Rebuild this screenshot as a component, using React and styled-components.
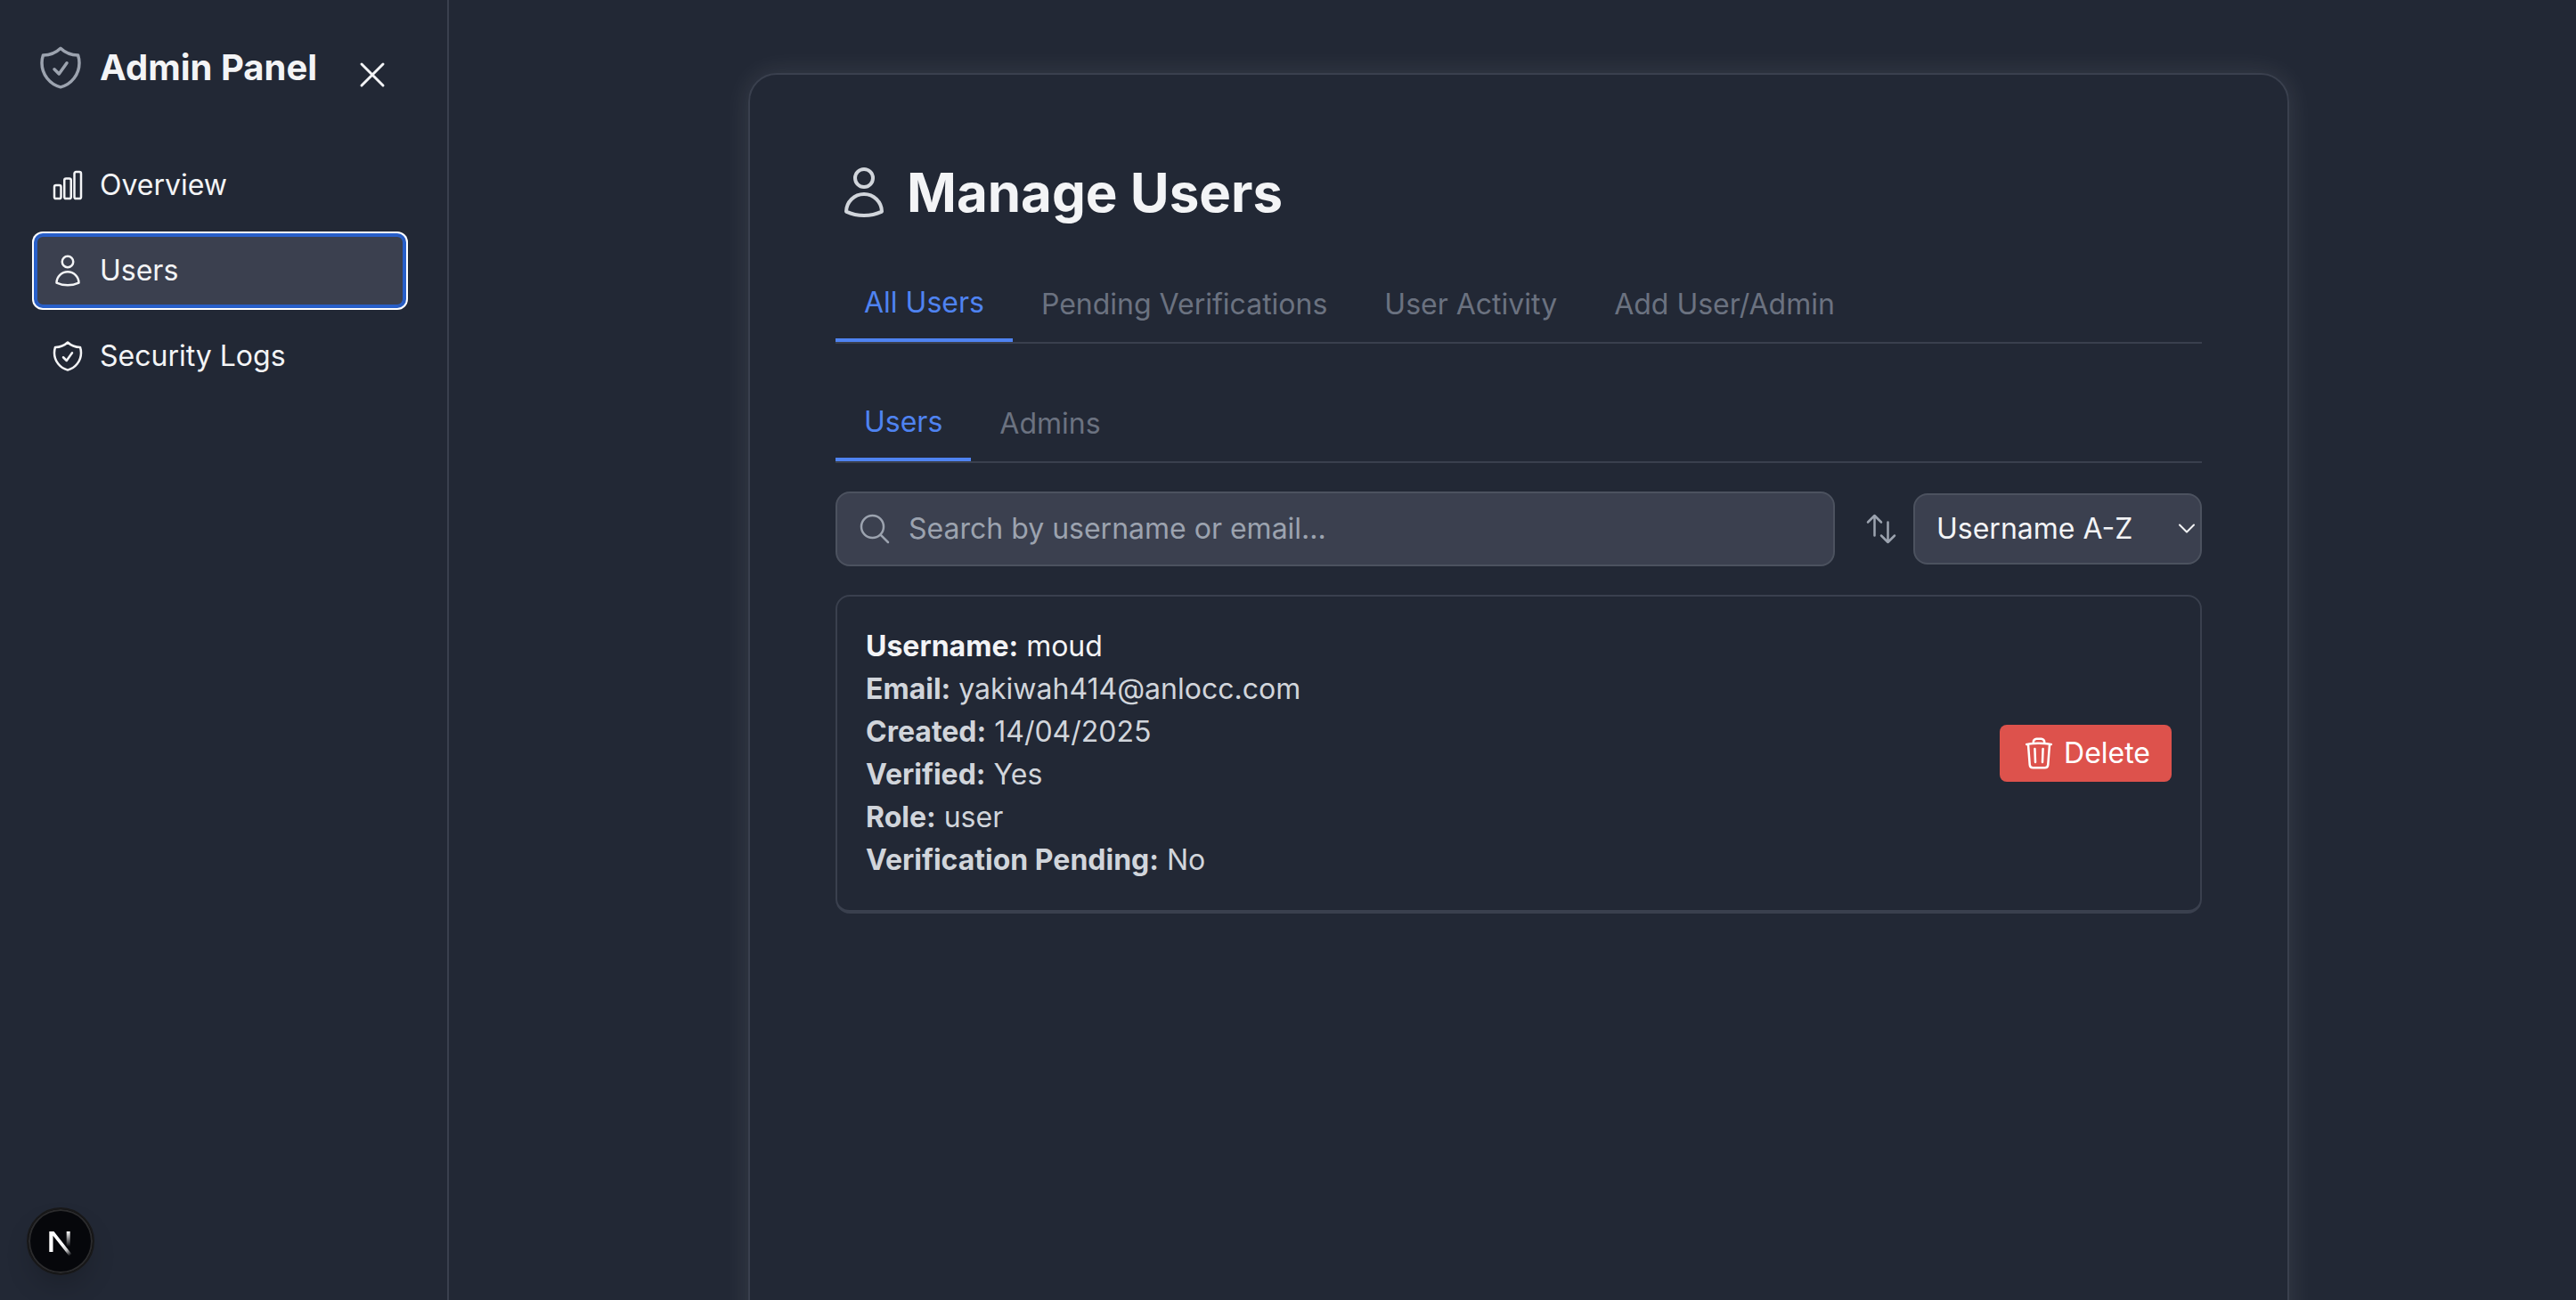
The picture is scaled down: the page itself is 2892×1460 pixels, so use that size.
import React from "react";
import styled, { createGlobalStyle, css } from "styled-components";
import {
  HiOutlineShieldCheck,
  HiOutlineChartBar,
  HiOutlineUser,
  HiOutlineXMark,
  HiOutlineArrowsUpDown,
  HiOutlineMagnifyingGlass,
  HiOutlineTrash,
} from "react-icons/hi2";

const color = {
  page: "#222835",
  surface: "#3b404f",
  line: "#3a404e",
  edge: "#4c525f",
  text: "#f3f4f6",
  soft: "#d1d5db",
  muted: "#9ca3af",
  dim: "#6b7280",
  accent: "#4f83f1",
  ring: "#285fc9",
  danger: "#dd524c",
};

const GlobalStyle = createGlobalStyle`
  *, *::before, *::after { box-sizing: border-box; }
  html { background: ${color.page}; }
  body {
    margin: 0;
    overflow: hidden;
    background: ${color.page};
    color: ${color.text};
    font-family: Inter, "Liberation Sans", sans-serif;
    font-size: 32px;
    line-height: 48px;
  }
  button, input, select { font: inherit; color: inherit; }
  button { border: 0; background: none; cursor: pointer; }
  svg { display: block; flex: none; }
`;

const Shell = styled.div`
  display: flex;
  height: 100vh;
`;

const Sidebar = styled.aside`
  display: flex;
  flex-direction: column;
  flex: none;
  width: 504px;
  padding: 48px 48px 24px 40px;
  border-right: 2px solid ${color.line};
`;

const Brand = styled.header`
  display: flex;
  align-items: flex-start;
  gap: 16px;
  margin-bottom: 48px;
`;

const BrandIcon = styled(HiOutlineShieldCheck)`
  width: 56px;
  height: 56px;
  color: ${color.muted};
`;

const BrandName = styled.h2`
  flex: 1;
  margin: 0;
  font-size: 40px;
  line-height: 56px;
  font-weight: 700;
`;

const CloseButton = styled.button`
  padding: 12px;
  svg {
    width: 48px;
    height: 48px;
  }
`;

const Nav = styled.nav`
  display: flex;
  flex-direction: column;
  gap: 16px;
`;

const NavItem = styled.button`
  display: flex;
  align-items: center;
  gap: 16px;
  padding: 16px;
  border-radius: 8px;
  text-align: left;
  svg {
    width: 40px;
    height: 40px;
  }
  ${(p) =>
    p.$active &&
    css`
      background: ${color.surface};
      box-shadow: inset 0 0 0 2px ${color.ring}, 0 0 0 2px ${color.ring}, 0 0 0 4px #fff;
    `}
`;

const DevBadge = styled.button`
  position: fixed;
  left: 30px;
  bottom: 28px;
  display: grid;
  place-items: center;
  width: 76px;
  height: 76px;
  padding: 0;
  border: 2px solid #181819;
  border-radius: 50%;
  background: #06070b;
  box-shadow: inset 0 0 0 2px #2b2b2d, 0 16px 32px -8px rgba(0, 0, 0, 0.24);
  svg {
    width: 72px;
    height: 72px;
  }
`;

const Main = styled.main`
  display: flex;
  flex: 1;
  min-width: 0;
  overflow: hidden;
  justify-content: center;
  align-items: flex-start;
  padding: 82px 48px 0 62px;
`;

const Card = styled.section`
  width: 100%;
  max-width: 1730px;
  min-height: 1600px;
  padding: 96px;
  border: 2px solid ${color.line};
  border-radius: 32px;
  box-shadow: 0 0 30px rgba(255, 255, 255, 0.1);
`;

const Title = styled.h1`
  display: flex;
  align-items: center;
  gap: 16px;
  margin: 0 0 48px;
  font-size: 60px;
  line-height: 72px;
  font-weight: 700;
  svg {
    width: 64px;
    height: 64px;
    color: ${color.soft};
  }
`;

const Tabs = styled.div`
  display: flex;
  margin-bottom: ${(p) => p.$gap}px;
  border-bottom: 2px solid ${color.line};
`;

const Tab = styled.button`
  padding: 16px 32px;
  color: ${color.dim};
  ${(p) =>
    p.$active &&
    css`
      color: ${color.accent};
      border-bottom: 4px solid ${color.accent};
    `}
`;

const Toolbar = styled.div`
  display: flex;
  align-items: center;
  gap: 32px;
  margin-bottom: 32px;
`;

const SearchBox = styled.label`
  display: flex;
  align-items: center;
  flex: 1;
  gap: 18px;
  height: 84px;
  padding: 0 22px;
  border: 2px solid ${color.edge};
  border-radius: 16px;
  background: ${color.surface};
  svg {
    width: 40px;
    height: 40px;
    color: ${color.muted};
  }
`;

const SearchInput = styled.input`
  flex: 1;
  min-width: 0;
  padding: 0;
  border: 0;
  outline: 0;
  background: none;
  &::placeholder {
    color: ${color.muted};
    opacity: 1;
  }
`;

const SortBox = styled.label`
  display: flex;
  align-items: center;
  gap: 16px;
  svg {
    width: 40px;
    height: 40px;
    color: ${color.muted};
  }
`;

const SelectWrap = styled.span`
  display: grid;
  align-items: center;
  > * {
    grid-area: 1 / 1;
  }
  svg {
    justify-self: end;
    width: 18px;
    height: 12px;
    margin-right: 8px;
    color: ${color.text};
    pointer-events: none;
  }
`;

const Select = styled.select`
  appearance: none;
  width: 324px;
  height: 80px;
  padding: 0 24px;
  border: 2px solid ${color.edge};
  border-radius: 16px;
  background: ${color.surface};
`;

const UserRow = styled.article`
  display: flex;
  align-items: center;
  justify-content: space-between;
  padding: 32px;
  border: 2px solid ${color.line};
  border-bottom-width: 4px;
  border-radius: 16px;
`;

const Facts = styled.div`
  color: ${color.soft};
`;

const Fact = styled.p`
  margin: 0;
  color: ${(p) => (p.$lead ? color.text : "inherit")};
`;

const DeleteButton = styled.button`
  display: flex;
  align-items: center;
  gap: 8px;
  padding: 8px 24px;
  border-radius: 8px;
  background: ${color.danger};
  color: #fff;
  svg {
    width: 40px;
    height: 40px;
  }
`;

const navItems = [
  { label: "Overview", Icon: HiOutlineChartBar },
  { label: "Users", Icon: HiOutlineUser },
  { label: "Security Logs", Icon: HiOutlineShieldCheck },
];

const sections = ["All Users", "Pending Verifications", "User Activity", "Add User/Admin"];
const roles = ["Users", "Admins"];

const facts = [
  ["Username", "moud"],
  ["Email", "yakiwah414@anlocc.com"],
  ["Created", "14/04/2025"],
  ["Verified", "Yes"],
  ["Role", "user"],
  ["Verification Pending", "No"],
];

function DevLogo() {
  return (
    <svg viewBox="0 0 72 72" fill="none" aria-hidden="true">
      <defs>
        <linearGradient id="diagonal" x1="38" y1="40" x2="47" y2="52" gradientUnits="userSpaceOnUse">
          <stop stopColor="#fff" />
          <stop offset="0.5" stopColor="#fff" stopOpacity="0.8" />
          <stop offset="1" stopColor="#fff" stopOpacity="0" />
        </linearGradient>
        <linearGradient id="stem" x1="45" y1="25" x2="45" y2="42" gradientUnits="userSpaceOnUse">
          <stop stopColor="#fff" />
          <stop offset="1" stopColor="#fff" stopOpacity="0" />
        </linearGradient>
      </defs>
      <path d="M23.300 25h5.200L48.500 50.500l-2.800 2.200L27.500 29.800V48h-4.200z" fill="url(#diagonal)" />
      <path d="M42.700 25h4v17h-4z" fill="url(#stem)" />
    </svg>
  );
}

function Chevron() {
  return (
    <svg viewBox="0 0 18 12" fill="none" stroke="currentColor" strokeWidth="2" strokeLinecap="round" strokeLinejoin="round" aria-hidden="true">
      <path d="M1 1.500l8 8 8-8" />
    </svg>
  );
}

function TabBar({ label, items, gap }) {
  return (
    <Tabs role="tablist" aria-label={label} $gap={gap}>
      {items.map((item, i) => (
        <Tab key={item} type="button" role="tab" aria-selected={i === 0} $active={i === 0}>
          {item}
        </Tab>
      ))}
    </Tabs>
  );
}

export default function App() {
  return (
    <>
      <GlobalStyle />
      <Shell>
        <Sidebar>
          <Brand>
            <BrandIcon />
            <BrandName>Admin Panel</BrandName>
            <CloseButton type="button" aria-label="Close sidebar">
              <HiOutlineXMark />
            </CloseButton>
          </Brand>
          <Nav>
            {navItems.map(({ label, Icon }) => (
              <NavItem key={label} type="button" $active={label === "Users"}>
                <Icon />
                {label}
              </NavItem>
            ))}
          </Nav>
        </Sidebar>
        <Main>
          <Card>
            <Title>
              <HiOutlineUser />
              Manage Users
            </Title>
            <TabBar label="Sections" items={sections} gap={48} />
            <TabBar label="Account type" items={roles} gap={32} />
            <Toolbar>
              <SearchBox>
                <HiOutlineMagnifyingGlass />
                <SearchInput type="text" aria-label="Search users" placeholder="Search by username or email..." />
              </SearchBox>
              <SortBox>
                <HiOutlineArrowsUpDown />
                <SelectWrap>
                  <Select aria-label="Sort users" defaultValue="az">
                    <option value="az">Username A-Z</option>
                    <option value="za">Username Z-A</option>
                  </Select>
                  <Chevron />
                </SelectWrap>
              </SortBox>
            </Toolbar>
            <UserRow>
              <Facts>
                {facts.map(([name, value], i) => (
                  <Fact key={name} $lead={i === 0}>
                    <strong>{name}:</strong> {value}
                  </Fact>
                ))}
              </Facts>
              <DeleteButton type="button">
                <HiOutlineTrash />
                Delete
              </DeleteButton>
            </UserRow>
          </Card>
        </Main>
      </Shell>
      <DevBadge type="button" aria-label="Open developer tools">
        <DevLogo />
      </DevBadge>
    </>
  );
}
